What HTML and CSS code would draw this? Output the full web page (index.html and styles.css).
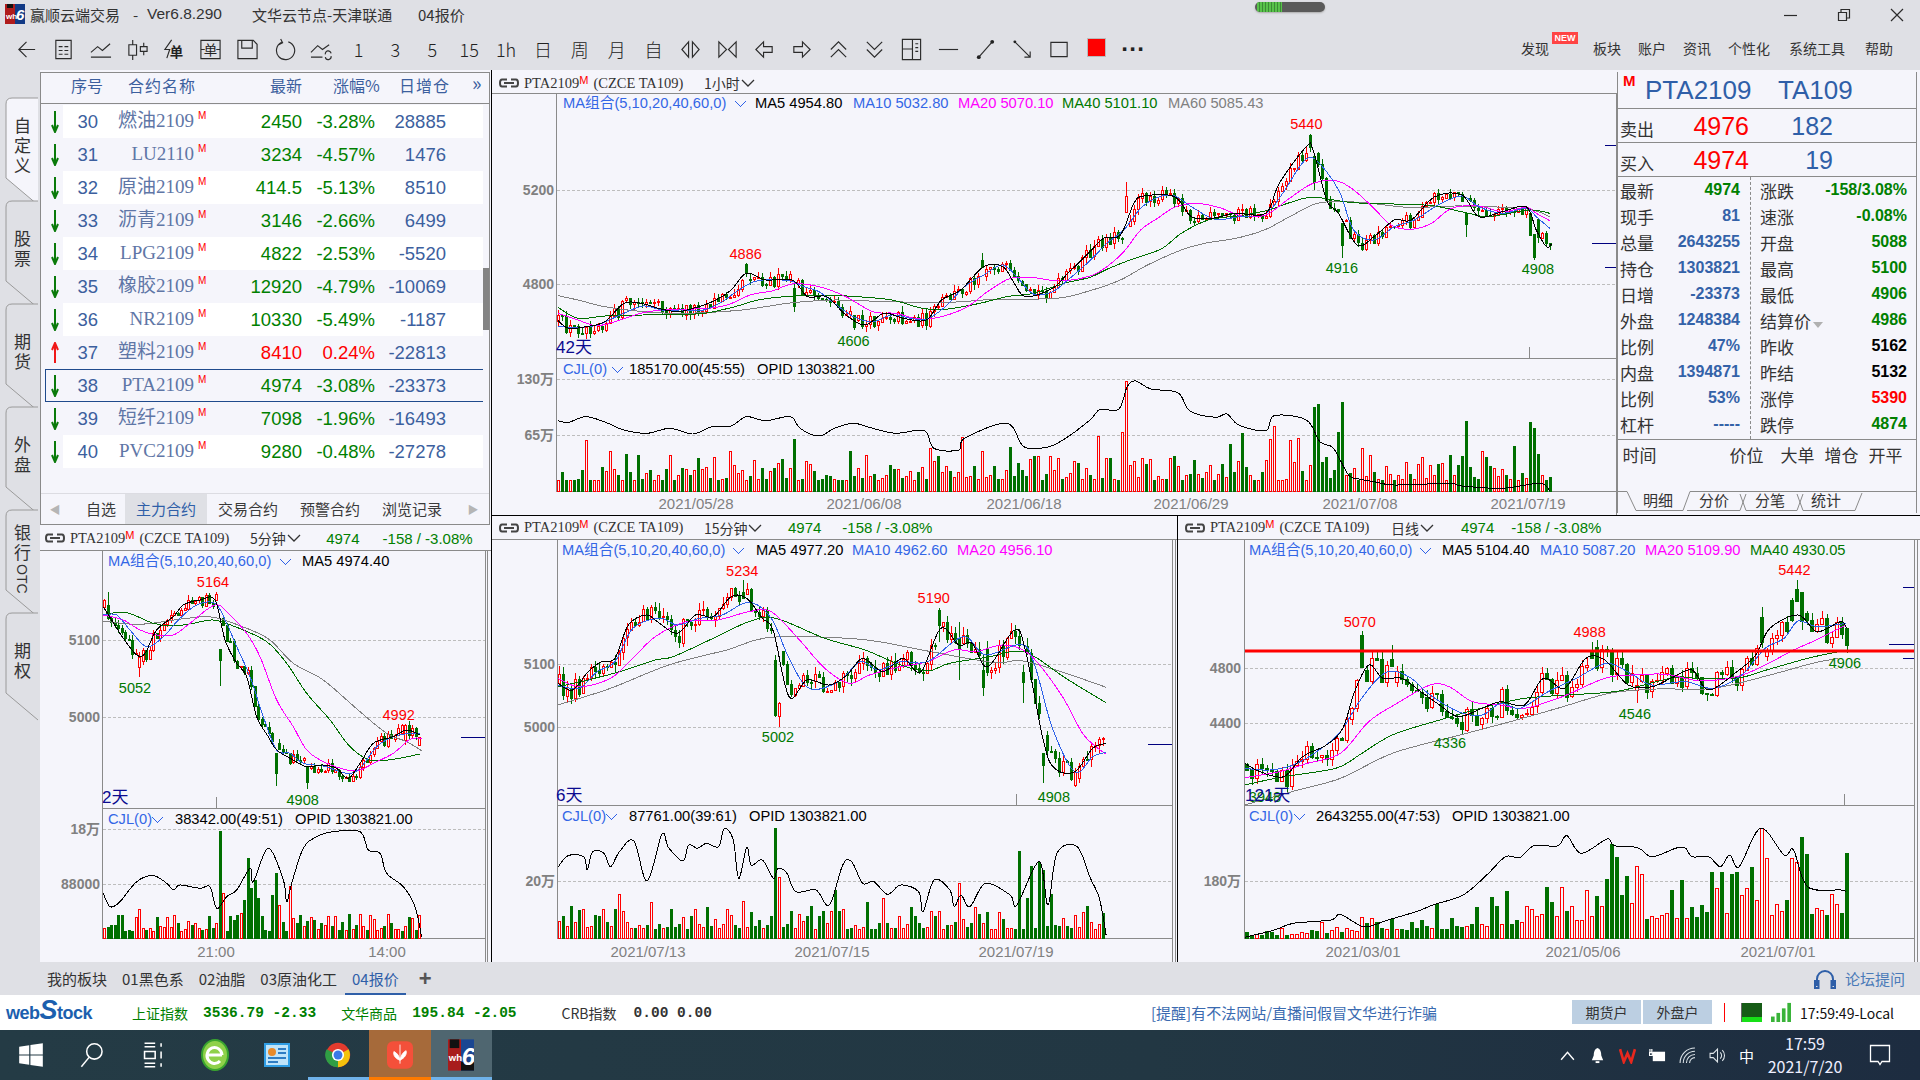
FILE: index.html
```html
<!DOCTYPE html>
<html lang="zh-CN">
<head>
<meta charset="utf-8">
<title>赢顺云端交易</title>
<link rel="stylesheet" href="styles.css">
</head>
<body>
<div class="app">
  <div class="titlebar">
    <svg class="applogo" viewBox="0 0 20 20"><rect width="10" height="20" fill="#b01c1c"/><rect x="10" width="10" height="20" fill="#123a86"/><rect x="2" y="0" width="6" height="4" fill="#111"/><text x="1" y="15" class="logotxt">wh</text><text x="11" y="16" class="logosix">6</text></svg>
    <span class="tt1">赢顺云端交易</span><span class="tt2">-</span><span class="tt3">Ver6.8.290</span><span class="tt4">文华云节点-天津联通</span><span class="tt5">04报价</span>
    <div class="pill"><i class="pillgreen"></i></div>
    <div class="winbtns">
      <svg viewBox="0 0 14 14"><path d="M0 7.5H13" class="ln"/></svg>
      <svg viewBox="0 0 14 14"><path d="M1.5 4.5H9.5V12.5H1.5ZM4 4.5V1.5H12.5V10H9.5" class="ln"/></svg>
      <svg viewBox="0 0 14 14"><path d="M1 1L13 13M13 1L1 13" class="ln"/></svg>
    </div>
  </div>

  <div class="toolbar">
    <div class="tools">
      <span class="tool"><svg viewBox="0 0 24 24"><path d="M21 12H4M12 4L4 12L12 20" class="ln"/></svg></span>
      <span class="tool"><svg viewBox="0 0 24 24"><path d="M4 2.5H20V21.5H4ZM7 9H11M13 9H17M7 13H11M13 13H17M7 17H11M13 17H17" class="ln"/></svg></span>
      <span class="tool"><svg viewBox="0 0 24 24"><path d="M2 20H23M2 15L9 9L14 13L22 6" class="ln"/></svg></span>
      <span class="tool"><svg viewBox="0 0 24 24"><path d="M3 7H11V18H3ZM7 2V7M7 18V23M15 9H22V14H15ZM18.500 5V9M18.500 14V18" class="ln"/></svg></span>
      <span class="tool"><svg viewBox="0 0 24 24"><path d="M9 2L2 12H7L4 21" class="ln"/><text x="7" y="20" class="tooltxt">单</text></svg></span>
      <span class="tool"><svg viewBox="0 0 24 24"><path d="M2 2.500H22V21.500H2ZM2 12H6M18 12H22" class="ln"/><text x="5" y="18" class="tooltxt2">单</text></svg></span>
      <span class="tool"><svg viewBox="0 0 24 24"><path d="M2 2.500H18L22 6.500V21.500H2ZM6 2.500V10.500H17V2.500" class="ln"/></svg></span>
      <span class="tool"><svg viewBox="0 0 24 24"><path d="M9 4.500A9.500 9.500 0 1 0 16 4M8 1L10 5L6 7" class="ln"/></svg></span>
      <span class="tool"><svg viewBox="0 0 24 24"><path d="M1 20H13M1 15L8 8L13 12L20 7M16 17A3 3 0 0 1 22 16M22 19A3 3 0 0 1 16 20" class="ln"/></svg></span>
      <span class="tool tnum">1</span><span class="tool tnum">3</span><span class="tool tnum">5</span><span class="tool tnum">15</span><span class="tool tnum">1h</span><span class="tool tnum">日</span><span class="tool tnum">周</span><span class="tool tnum">月</span><span class="tool tnum">自</span>
      <span class="tool"><svg viewBox="0 0 24 24"><path d="M10 4L3 12L10 20ZM14 4L21 12L14 20Z" class="ln"/></svg></span>
      <span class="tool"><svg viewBox="0 0 24 24"><path d="M3 4L11 12L3 20ZM21 4L13 12L21 20Z" class="ln"/></svg></span>
      <span class="tool"><svg viewBox="0 0 24 24"><path d="M11 4L3 12L11 20V15H20V9H11Z" class="ln"/></svg></span>
      <span class="tool"><svg viewBox="0 0 24 24"><path d="M13 4L21 12L13 20V15H4V9H13Z" class="ln"/></svg></span>
      <span class="tool"><svg viewBox="0 0 24 24"><path d="M4 12L12 4L20 12M4 20L12 12L20 20" class="ln"/></svg></span>
      <span class="tool"><svg viewBox="0 0 24 24"><path d="M4 4L12 12L20 4M4 12L12 20L20 12" class="ln"/></svg></span>
      <span class="tool"><svg viewBox="0 0 24 24"><path d="M2.500 1.500H21.500V22.500H2.500ZM2.500 11.500H13M13 1.500V22.500M16 6H19M16 10H19M16 14H19" class="ln"/></svg></span>
      <span class="tool"><svg viewBox="0 0 24 24"><path d="M2 12H22" class="ln"/></svg></span>
      <span class="tool"><svg viewBox="0 0 24 24"><path d="M5 20L19 4" class="ln"/><circle cx="5" cy="20" r="2"/><circle cx="19" cy="4" r="2"/></svg></span>
      <span class="tool"><svg viewBox="0 0 24 24"><path d="M4 4L20 20M14 20H20V14" class="ln"/><circle cx="4" cy="4" r="1.500"/></svg></span>
      <span class="tool"><svg viewBox="0 0 24 24"><path d="M3 4.500H20V19.500H3Z" class="ln"/></svg></span>
      <span class="tool"><i class="redsq"></i></span>
      <span class="tool tdots">···</span>
    </div>
    <nav class="menu">
      <span class="mfind">发现<b class="newb">NEW</b></span><span class="m1">板块</span><span class="m2">账户</span><span class="m3">资讯</span><span class="m4">个性化</span><span class="m5">系统工具</span><span class="m6">帮助</span>
    </nav>
  </div>

  <div class="main">
    <aside class="sidetabs">
      <div class="stab active"><svg class="stabbg" viewBox="0 0 40 112"><path d="M38 1H12Q6 1 6 7V81L38 108"/></svg><span>自定义</span></div>
      <div class="stab"><svg class="stabbg" viewBox="0 0 40 112"><path d="M38 1H12Q6 1 6 7V81L38 108"/></svg><span>股票</span></div>
      <div class="stab"><svg class="stabbg" viewBox="0 0 40 112"><path d="M38 1H12Q6 1 6 7V81L38 108"/></svg><span>期货</span></div>
      <div class="stab"><svg class="stabbg" viewBox="0 0 40 112"><path d="M38 1H12Q6 1 6 7V81L38 108"/></svg><span>外盘</span></div>
      <div class="stab"><svg class="stabbg" viewBox="0 0 40 112"><path d="M38 1H12Q6 1 6 7V81L38 108"/></svg><span>银行<em class="otc">OTC</em></span></div>
      <div class="stab"><svg class="stabbg" viewBox="0 0 40 112"><path d="M38 1H12Q6 1 6 7V81L38 108"/></svg><span>期权</span></div>
    </aside>

    <div class="leftcol">
      <section class="list">
        <div class="lhead"><span class="h1">序号</span><span class="h2">合约名称</span><span class="h3">最新</span><span class="h4">涨幅%</span><span class="h5">日增仓</span><span class="h6">»</span></div>
        <div class="lbody">
          <div class="lrows">
            <div class="row odd"><span class="ar"><svg viewBox="0 0 10 22"><path d="M5 0V21M2 14L5 21L8 14" class="ardn"/></svg></span><span>30</span><span class="nm">燃油2109</span><sup>M</sup><span class="dn">2450</span><span class="dn">-3.28%</span><span>28885</span></div>
            <div class="row"><span class="ar"><svg viewBox="0 0 10 22"><path d="M5 0V21M2 14L5 21L8 14" class="ardn"/></svg></span><span>31</span><span class="nm">LU2110</span><sup>M</sup><span class="dn">3234</span><span class="dn">-4.57%</span><span>1476</span></div>
            <div class="row odd"><span class="ar"><svg viewBox="0 0 10 22"><path d="M5 0V21M2 14L5 21L8 14" class="ardn"/></svg></span><span>32</span><span class="nm">原油2109</span><sup>M</sup><span class="dn">414.5</span><span class="dn">-5.13%</span><span>8510</span></div>
            <div class="row"><span class="ar"><svg viewBox="0 0 10 22"><path d="M5 0V21M2 14L5 21L8 14" class="ardn"/></svg></span><span>33</span><span class="nm">沥青2109</span><sup>M</sup><span class="dn">3146</span><span class="dn">-2.66%</span><span>6499</span></div>
            <div class="row odd"><span class="ar"><svg viewBox="0 0 10 22"><path d="M5 0V21M2 14L5 21L8 14" class="ardn"/></svg></span><span>34</span><span class="nm">LPG2109</span><sup>M</sup><span class="dn">4822</span><span class="dn">-2.53%</span><span>-5520</span></div>
            <div class="row"><span class="ar"><svg viewBox="0 0 10 22"><path d="M5 0V21M2 14L5 21L8 14" class="ardn"/></svg></span><span>35</span><span class="nm">橡胶2109</span><sup>M</sup><span class="dn">12920</span><span class="dn">-4.79%</span><span>-10069</span></div>
            <div class="row odd"><span class="ar"><svg viewBox="0 0 10 22"><path d="M5 0V21M2 14L5 21L8 14" class="ardn"/></svg></span><span>36</span><span class="nm">NR2109</span><sup>M</sup><span class="dn">10330</span><span class="dn">-5.49%</span><span>-1187</span></div>
            <div class="row"><span class="ar"><svg viewBox="0 0 10 22"><path d="M5 21V1M2 8L5 1L8 8" class="arup"/></svg></span><span>37</span><span class="nm">塑料2109</span><sup>M</sup><span class="up">8410</span><span class="up">0.24%</span><span>-22813</span></div>
            <div class="row sel"><span class="ar"><svg viewBox="0 0 10 22"><path d="M5 0V21M2 14L5 21L8 14" class="ardn"/></svg></span><span>38</span><span class="nm">PTA2109</span><sup>M</sup><span class="dn">4974</span><span class="dn">-3.08%</span><span>-23373</span></div>
            <div class="row"><span class="ar"><svg viewBox="0 0 10 22"><path d="M5 0V21M2 14L5 21L8 14" class="ardn"/></svg></span><span>39</span><span class="nm">短纤2109</span><sup>M</sup><span class="dn">7098</span><span class="dn">-1.96%</span><span>-16493</span></div>
            <div class="row odd"><span class="ar"><svg viewBox="0 0 10 22"><path d="M5 0V21M2 14L5 21L8 14" class="ardn"/></svg></span><span>40</span><span class="nm">PVC2109</span><sup>M</sup><span class="dn">9280</span><span class="dn">-0.48%</span><span>-27278</span></div>
          </div>
          <div class="scroll"><i class="thumb"></i></div>
        </div>
        <div class="ltabs">
          <span class="lnav">◀</span><span class="lt first">自选</span><span class="lt on">主力合约</span><span class="lt">交易合约</span><span class="lt">预警合约</span><span class="lt">浏览记录</span><span class="lnav nr">▶</span>
        </div>
      </section>
      <section class="chart c5">
        <header class="chead">
          <svg class="link" viewBox="0 0 20 10"><path d="M8 1.500H3Q1 1.500 1 5T3 8.500H8M12 1.500H17Q19 1.500 19 5T17 8.500H12M5 5H15" class="lnk"/></svg>
          <span class="sym">PTA2109<sup>M</sup></span><span class="sym ex">(CZCE TA109)</span><span class="per">5分钟<svg class="chev" viewBox="0 0 14 8"><path d="M1 1L7 7L13 1"/></svg></span><span class="px">4974</span><span class="chg">-158 / -3.08%</span>
        </header>
        <svg class="plot" id="c5"></svg>
      </section>
    </div>

    <div class="rightcol">
      <div class="toprow">
        <section class="chart c60">
          <header class="chead">
            <svg class="link" viewBox="0 0 20 10"><path d="M8 1.500H3Q1 1.500 1 5T3 8.500H8M12 1.500H17Q19 1.500 19 5T17 8.500H12M5 5H15" class="lnk"/></svg>
            <span class="sym">PTA2109<sup>M</sup></span><span class="sym ex">(CZCE TA109)</span><span class="per">1小时<svg class="chev" viewBox="0 0 14 8"><path d="M1 1L7 7L13 1"/></svg></span>
          </header>
          <svg class="plot" id="c60"></svg>
        </section>
        <aside class="detail">
          <div class="dtitle"><b class="dm">M</b><span class="dsym">PTA2109</span><span class="dsym d2">TA109</span></div>
          <div class="dq"><span class="dql">卖出</span><span class="dqp">4976</span><span class="dqv">182</span></div>
          <div class="dq"><span class="dql">买入</span><span class="dqp">4974</span><span class="dqv">19</span></div>
          <div class="dgrid">
            <div class="dcol">
              <div class="dr"><span>最新</span><b class="g">4974</b></div>
              <div class="dr"><span>现手</span><b>81</b></div>
              <div class="dr"><span>总量</span><b>2643255</b></div>
              <div class="dr"><span>持仓</span><b>1303821</b></div>
              <div class="dr"><span>日增</span><b>-23373</b></div>
              <div class="dr"><span>外盘</span><b>1248384</b></div>
              <div class="dr"><span>比例</span><b>47%</b></div>
              <div class="dr"><span>内盘</span><b>1394871</b></div>
              <div class="dr"><span>比例</span><b>53%</b></div>
              <div class="dr"><span>杠杆</span><b>-----</b></div>
            </div>
            <div class="dcol r">
              <div class="dr"><span>涨跌</span><b class="g">-158/3.08%</b></div>
              <div class="dr"><span>速涨</span><b class="g">-0.08%</b></div>
              <div class="dr"><span>开盘</span><b class="g">5088</b></div>
              <div class="dr"><span>最高</span><b class="g">5100</b></div>
              <div class="dr"><span>最低</span><b class="g">4906</b></div>
              <div class="dr"><span>结算价<i class="caret"></i></span><b class="g">4986</b></div>
              <div class="dr"><span>昨收</span><b class="k">5162</b></div>
              <div class="dr"><span>昨结</span><b class="k">5132</b></div>
              <div class="dr"><span>涨停</span><b class="rd">5390</b></div>
              <div class="dr"><span>跌停</span><b class="g">4874</b></div>
            </div>
          </div>
          <div class="dticks"><span class="t1">时间</span><span class="t2">价位</span><span class="t3">大单</span><span class="t3">增仓</span><span class="t3">开平</span></div>
          <div class="dtabs">
            <svg class="dtabsbg" viewBox="0 0 300 24"><path d="M0 .5H10L19 19.500H66L73 .5H300M70 19.500H123L129 3M123 3L129 19.500H180L186 3M180 3L186 19.500H238L245 2"/></svg>
            <span class="dt on">明细</span><span class="dt">分价</span><span class="dt">分笔</span><span class="dt">统计</span>
          </div>
        </aside>
      </div>
      <div class="botrow">
        <section class="chart c15">
          <header class="chead">
            <svg class="link" viewBox="0 0 20 10"><path d="M8 1.500H3Q1 1.500 1 5T3 8.500H8M12 1.500H17Q19 1.500 19 5T17 8.500H12M5 5H15" class="lnk"/></svg>
            <span class="sym">PTA2109<sup>M</sup></span><span class="sym ex">(CZCE TA109)</span><span class="per">15分钟<svg class="chev" viewBox="0 0 14 8"><path d="M1 1L7 7L13 1"/></svg></span><span class="px">4974</span><span class="chg">-158 / -3.08%</span>
          </header>
          <svg class="plot" id="c15"></svg>
        </section>
        <section class="chart cd">
          <header class="chead">
            <svg class="link" viewBox="0 0 20 10"><path d="M8 1.500H3Q1 1.500 1 5T3 8.500H8M12 1.500H17Q19 1.500 19 5T17 8.500H12M5 5H15" class="lnk"/></svg>
            <span class="sym">PTA2109<sup>M</sup></span><span class="sym ex">(CZCE TA109)</span><span class="per">日线<svg class="chev" viewBox="0 0 14 8"><path d="M1 1L7 7L13 1"/></svg></span><span class="px">4974</span><span class="chg">-158 / -3.08%</span>
          </header>
          <svg class="plot" id="cd"></svg>
        </section>
      </div>
    </div>
  </div>

  <div class="boardbar">
    <div class="boards"><span class="bd">我的板块</span><span class="bd">01黑色系</span><span class="bd">02油脂</span><span class="bd">03原油化工</span><span class="bd on">04报价</span><span class="bplus">+</span></div>
    <div class="forum"><svg viewBox="0 0 24 24"><path d="M4 19V12A8 8 0 0 1 20 12V19M2 14H5.500V21H2ZM18.500 14H22V21H18.500Z" class="hs"/></svg><span>论坛提问</span></div>
  </div>

  <div class="status">
    <div class="wslogo">web<i>S</i>tock</div>
    <span class="idx g s1">上证指数</span><span class="idxv g">3536.79 -2.33</span>
    <span class="idx g s2">文华商品</span><span class="idxv g">195.84 -2.05</span>
    <span class="idx s3">CRB指数</span><span class="idxv v3">0.00 0.00</span>
    <span class="notice">[提醒]有不法网站/直播间假冒文华进行诈骗</span>
    <span class="acct">期货户</span><span class="acct a2">外盘户</span>
    <i class="redbar"></i>
    <i class="mem"></i>
    <svg class="sig" viewBox="0 0 22 22"><rect x="0" y="16" width="4" height="6"/><rect x="6" y="12" width="4" height="10"/><rect x="12" y="7" width="4" height="15"/><rect x="18" y="1" width="4" height="21"/></svg>
    <span class="clock">17:59:49-Local</span>
  </div>

  <footer class="taskbar">
    <div class="tbleft">
      <span class="tb"><svg viewBox="0 0 22 22"><path d="M1 4L9.500 2.800V10.500H1ZM10.500 2.600L21 1V10.500H10.500ZM1 11.500H9.500V19.200L1 18ZM10.500 11.500H21V21L10.500 19.400Z" fill="#fff"/></svg></span>
      <span class="tb"><svg viewBox="0 0 22 22"><circle cx="13" cy="8" r="6.500" class="wln"/><path d="M8.500 13L2 21" class="wln"/></svg></span>
      <span class="tb"><svg viewBox="0 0 22 22"><path d="M3 1H12M3 4H12M3 8H12V14H3V8ZM3 18H12M3 21H12M17 1V4M17 8V14M17 18V21" class="wln"/></svg></span>
      <span class="tb"><svg viewBox="0 0 28 32"><ellipse cx="14" cy="16" rx="13" ry="15" fill="#8fd14a" stroke="#3aa52f" stroke-width="2"/><path d="M7 16H21M21 16A7.500 8 0 1 0 19 22" class="eln"/></svg></span>
      <span class="tb"><svg viewBox="0 0 28 28"><rect x="1" y="2" width="26" height="24" fill="#2f9de4"/><rect x="3" y="4" width="22" height="20" fill="#bfe4fa"/><circle cx="9" cy="11" r="4" fill="#e88a2a"/><path d="M15 8H23M15 12H23M5 17H23M5 21H15" stroke="#2f7dc4" stroke-width="2"/></svg></span>
      <span class="tb"><svg viewBox="0 0 32 32"><circle cx="16" cy="16" r="15" fill="#e33b2e"/><path d="M16 16L29 9A15 15 0 0 1 16 31Z" fill="#f4c20d"/><path d="M16 16L16 31A15 15 0 0 1 2 9Z" fill="#2f9e44"/><circle cx="16" cy="16" r="7.500" fill="#fff"/><circle cx="16" cy="16" r="5.500" fill="#3b78e7"/></svg></span>
      <span class="tb t-orange"><svg viewBox="0 0 30 36"><rect x="0" y="2" width="30" height="32" rx="7" fill="#f4503a"/><path d="M15 6V28M15 24C9 22 7 18 8 14C12 16 14 19 15 24M15 24C21 21 23 17 22 13C18 15 16 19 15 24" fill="#fff" stroke="#fff"/></svg></span>
      <span class="tb t-wh"><svg viewBox="0 0 30 36"><rect width="15" height="36" fill="#a81c1c"/><rect x="15" width="15" height="36" fill="#1a4692"/><rect x="2" width="11" height="10" fill="#111"/><rect x="15" y="26" width="15" height="10" fill="#111"/><text x="1" y="25" class="whtxt">wh</text><text x="16" y="30" class="whsix">6</text></svg></span>
    </div>
    <div class="tray">
      <svg class="tr" viewBox="0 0 16 16"><path d="M2 12L8 5L14 12" class="wln"/></svg>
      <svg class="tr" viewBox="0 0 16 18"><path d="M8 1C11 2 12 5 12 9L14 14H2L4 9C4 5 5 2 8 1Z" fill="#fff"/><rect x="6" y="15" width="4" height="2" fill="#fff"/></svg>
      <svg class="tr" viewBox="0 0 16 16"><path d="M1 2L4.500 14L8 6L11.500 14L15 2" class="redw"/></svg>
      <svg class="tr" viewBox="0 0 18 16"><rect x="4" y="4" width="13" height="10" fill="#fff"/><path d="M1 1V5M3 1V5M0.500 5H3.500V8H0.500Z" class="wln"/></svg>
      <svg class="tr" viewBox="0 0 16 16"><path d="M1 15A14 14 0 0 1 15 1M4 15A11 11 0 0 1 15 4M7 15A8 8 0 0 1 15 7M10 15A5 5 0 0 1 15 10" class="wlnt"/></svg>
      <svg class="tr" viewBox="0 0 16 16"><path d="M1 6H4L8 2V14L4 10H1ZM10.500 5A4 4 0 0 1 10.500 11M12.500 3A7 7 0 0 1 12.500 13" class="wlnt"/></svg>
      <span class="ime">中</span>
      <div class="tdate"><span>17:59</span><span>2021/7/20</span></div>
      <svg class="notif" viewBox="0 0 22 22"><path d="M1.500 1.500H20.500V17.500H13L11 20.500L9 17.500H1.500Z" class="wln"/></svg>
    </div>
  </footer>
</div>
<script src="chart.js"></script>
</body>
</html>
```

FILE: styles.css
```css
* { box-sizing: border-box; }
html, body { margin: 0; padding: 0; }
body { font-family: "Noto Sans CJK SC", "Noto Sans", sans-serif; background: #dfe0e5; color: #333; }
.app { width: 1920px; height: 1080px; display: flex; flex-direction: column; overflow: hidden; position: relative; }

/* title bar */
.titlebar { height: 28px; display: flex; align-items: center; padding-left: 5px; font-size: 15px; color: #333; position: relative; }
.applogo { width: 20px; height: 20px; margin-right: 5px; }
.logotxt { font: bold 8px "Liberation Sans", sans-serif; fill: #fff; }
.logosix { font: italic bold 15px "Liberation Sans", sans-serif; fill: #fff; }
.tt1 { width: 103px; }
.tt2 { width: 14px; }
.tt3 { width: 105px; font-family: "Liberation Sans", sans-serif; font-size: 15.500px; }
.tt4 { width: 166px; }
.pill { position: absolute; left: 1255px; top: 2px; width: 70px; height: 10px; border-radius: 5px; background: #5a5a5a; box-shadow: 0 1px 2px #aaa; overflow: hidden; }
.pillgreen { display: block; width: 25px; height: 10px; margin-left: 2px; background: repeating-linear-gradient(90deg, #58c24a 0 2px, #3c8a36 2px 3px); }
.winbtns { position: absolute; right: 16px; top: 8px; display: flex; gap: 39px; }
.winbtns svg { width: 14px; height: 14px; }
.ln { fill: none; stroke: #2b2b2b; stroke-width: 1.2; }

/* toolbar */
.toolbar { height: 42px; display: flex; justify-content: space-between; align-items: center; }
.tools { display: flex; padding-left: 8px; }
.tool { width: 36.9px; height: 30px; display: flex; align-items: center; justify-content: center; color: #222; }
.tool svg { width: 23px; height: 23px; }
.tool svg circle { fill: #222; }
.tooltxt { font-size: 14px; fill: #222; font-weight: bold; }
.tooltxt2 { font-size: 14px; fill: #222; }
.tnum { font-size: 18px; font-family: "Noto Sans CJK SC", sans-serif; font-weight: 300; }
.tdots { font-size: 24px; font-weight: bold; letter-spacing: 0; font-family: "Liberation Sans", sans-serif; }
.redsq { width: 19px; height: 19px; background: #f00; border: 1px solid #bbb; display: block; margin-top: -4px; }
.menu { position: relative; height: 42px; width: 420px; font-size: 14px; color: #333; }
.menu span { position: absolute; top: 10px; }
.mfind { left: 21px; }
.newb { position: absolute; left: 31px; top: -6px; width: 26px; height: 12px; background: #f44; color: #fff; font: bold 9px/12px "Liberation Sans", sans-serif; text-align: center; }
.m1 { left: 93px; } .m2 { left: 138px; } .m3 { left: 183px; } .m4 { left: 228px; } .m5 { left: 289px; } .m6 { left: 365px; }

/* main */
.main { height: 892px; display: flex; background: #f5f5fb; }
.sidetabs { width: 40px; padding-top: 27px; background: #dfe0e5; flex: none; }
.stab { height: 103px; position: relative; font-size: 17px; color: #333; display: flex; align-items: center; justify-content: flex-start; padding: 0 0 4px 12px; }
.stab span { position: relative; display: block; writing-mode: vertical-rl; letter-spacing: 3px; line-height: 20px; white-space: nowrap; }
.otc { font-style: normal; font: 14px "Liberation Sans", sans-serif; letter-spacing: 0; }
.stabbg { position: absolute; left: 0; top: 0; width: 40px; height: 112px; overflow: visible; }
.stabbg path { fill: #dfe0e5; stroke: #9a9a9a; }
.active .stabbg path { fill: #f5f5fb; }
.leftcol { width: 452px; flex: none; border-right: 1px solid #000; display: flex; flex-direction: column; }
.rightcol { flex: 1; display: flex; flex-direction: column; min-width: 0; }
.toprow { height: 446px; display: flex; border-bottom: 1px solid #000; flex: none; }
.botrow { flex: 1; display: flex; min-height: 0; }

/* quote list */
.list { height: 453px; margin: 2px 1px 0 0; width: 450px; border: 1px solid #8a8a8a; display: flex; flex-direction: column; flex: none; }
.lhead { height: 31px; border-bottom: 1px solid #8a8a8a; position: relative; font-size: 16px; color: #3c5f9e; flex: none; }
.lhead span { position: absolute; top: 0; }
.h1 { left: 30px; } .h2 { left: 87px; letter-spacing: 1px; } .h3 { left: 229px; } .h4 { left: 292px; } .h5 { left: 358px; letter-spacing: 1px; } .h6 { left: 431px; font-size: 20px; top: -5px !important; }
.lbody { flex: 1; display: flex; min-height: 0; }
.lrows { flex: 1; padding-top: 1px; }
.scroll { width: 6px; }
.thumb { display: block; width: 6px; height: 62px; margin-top: 164px; background: #848484; }
.row { height: 33px; display: grid; grid-template-columns: 22px 35px 96px 14px 94px 73px 71px; align-items: center; font: 18.500px "Liberation Sans", sans-serif; color: #3c5f9e; position: relative; }
.row span { text-align: right; white-space: nowrap; }
.row.odd { background: #fff; }
.row .ar { background: #f5f5fb; height: 33px; display: flex; justify-content: flex-end; align-items: center; padding-right: 3px; }
.ar svg { width: 10px; height: 22px; }
.ardn { fill: none; stroke: #0a7a0a; stroke-width: 2; }
.arup { fill: none; stroke: #f01818; stroke-width: 2; }
.row sup { color: #f00; font-size: 10px; line-height: 10px; align-self: start; margin: 6px 0 0 4px; font-family: "Liberation Sans", sans-serif; }
.row .nm { font: 19px/24px "Liberation Serif", "Noto Sans CJK SC", serif; color: #5f76a6; margin-top: -2px; }
.dn { color: #008000; }
.up { color: #f00; }
.sel::after { content: ""; position: absolute; left: 4px; right: 0; top: 0; bottom: 0; border: 1px solid #1f4a8c; border-right: 0; pointer-events: none; }
.ltabs { height: 31px; border-top: 1px solid #dcdce2; display: flex; align-items: stretch; font-size: 15px; color: #3a3a3a; position: relative; flex: none; }
.lnav { width: 36px; flex: none; color: #b5b5b5; font-size: 11px; line-height: 30px; text-align: center; padding-right: 8px; }
.lt { width: 82px; flex: none; line-height: 29px; text-align: center; }
.lt.first { width: 48px; }
.lt.on { background: #dfe0e5; color: #2f5fa8; }
.lnav.nr { padding: 0 0 0 4px; }

/* charts */
.chart { display: flex; flex-direction: column; position: relative; min-width: 0; }
.chead { display: flex; align-items: center; flex: none; height: 24px; border-bottom: 1px solid #8a8a8a; padding-left: 7px; font-size: 14px; color: #333; white-space: nowrap; }
.c60 .chead { padding-top: 3px; }
.link { width: 20px; height: 10px; margin-right: 5px; flex: none; }
.lnk { fill: none; stroke: #444; stroke-width: 2; }
.sym { font: 14.500px "Liberation Serif", serif; color: #333; }
.sym sup { color: #f00; font: 11px/1 "Liberation Sans", sans-serif; vertical-align: 4px; margin-right: 5px; }
.per { display: flex; align-items: center; font-size: 14px; margin-left: 20.500px; }
.chev { width: 14px; height: 8px; margin-left: 1px; }
.chev path { fill: none; stroke: #333; stroke-width: 1.300; }
.px { color: #008000; margin-left: 25.500px; font: 15px "Liberation Sans", sans-serif; }
.chg { color: #008000; margin-left: 21px; font: 15px "Liberation Sans", sans-serif; }
.plot { display: block; flex: 1; width: 100%; min-height: 0; }
.c5 { flex: 1; margin-top: 1px; }
.c5 .chead { height: 25px; padding-left: 5px; }
.c5 .chg { margin-left: 23px; }
.c60 { width: 1125px; flex: none; }
.c15 { width: 686px; flex: none; border-right: 1px solid #000; }
.c15 .chead { padding-left: 7px; }
.cd { flex: 1; }
.cd .chead { padding-left: 7px; }
.cd .per { margin-left: 21.500px; }
.cd .px { margin-left: 27px; }
.cd .chg { margin-left: 17px; }

/* svg chart text */
.ax { font: bold 14px "Liberation Sans", "Noto Sans CJK SC", sans-serif; fill: #808080; text-anchor: end; dominant-baseline: central; }
.dtx { font: 15px "Liberation Sans", sans-serif; fill: #808080; text-anchor: middle; dominant-baseline: central; }
.ml { font: 14.500px "Liberation Sans", sans-serif; text-anchor: middle; dominant-baseline: central; }
.lg { font: 14.700px "Liberation Sans", "Noto Sans CJK SC", sans-serif; dominant-baseline: central; white-space: pre; }
.days { font: 17px "Liberation Sans", "Noto Sans CJK SC", sans-serif; fill: #0a0a90; dominant-baseline: central; }
.fr { fill: #f00; } .fg { fill: #007800; } .fk { fill: #000; } .fb { fill: #3366e6; } .fm { fill: #f0f; } .fy { fill: #808080; }
.grid { stroke: #bdbdbd; stroke-dasharray: 3 2; stroke-width: 1; }
.axis { stroke: #8a8a8a; stroke-width: 1; }
.tick { stroke: #00007f; stroke-width: 1; }
.wick { stroke-width: 1; shape-rendering: crispEdges; }
.bar { shape-rendering: crispEdges; }
.ma { fill: none; stroke-width: 1; shape-rendering: crispEdges; }
.ma-k { stroke: #000; } .ma-b { stroke: #2f62e8; } .ma-m { stroke: #f0f; } .ma-g { stroke: #006f00; } .ma-y { stroke: #808080; }
.redline { stroke: #f00; stroke-width: 3; }

/* detail panel */
.detail { width: 300px; height: 441px; margin-top: 2px; border: 1px solid #8a8a8a; border-top: 0; border-bottom: 0; border-right: 1px solid #8a8a8a; display: flex; flex-direction: column; flex: none; position: relative; }
.dtitle { height: 37px; border-bottom: 1px solid #8a8a8a; position: relative; flex: none; }
.dm { position: absolute; left: 5px; top: 0; color: #f00; font: bold 15px "Liberation Sans", sans-serif; }
.dsym { position: absolute; left: 27px; top: 1px; font: 26px/34px "Liberation Sans", sans-serif; color: #2f5fa8; }
.d2 { left: 160px; }
.dq { height: 34px; border-bottom: 1px solid #8a8a8a; display: flex; position: relative; flex: none; }
.dql { position: absolute; left: 2px; top: 7px; font-size: 17px; color: #333; }
.dqp { position: absolute; right: 167px; top: 2px; font: 25px/30px "Liberation Sans", sans-serif; color: #f00; }
.dqv { position: absolute; right: 83px; top: 2px; font: 25px/30px "Liberation Sans", sans-serif; color: #2f5fa8; }
.dgrid { display: flex; height: 263px; border-bottom: 1px solid #8a8a8a; flex: none; }
.dcol { width: 133px; border-right: 1px dashed #8a8a8a; }
.dcol.r { flex: 1; border: 0; }
.dr { height: 26px; display: flex; justify-content: space-between; align-items: center; padding: 0 10px 0 2px; font-size: 17px; color: #333; }
.dcol.r .dr { padding: 0 9px 0 9px; }
.dr b { font: bold 16px "Liberation Sans", sans-serif; color: #3462a8; }
.dr b.g { color: #008000; } .dr b.k { color: #000; } .dr b.rd { color: #f00; }
.caret { display: inline-block; width: 0; height: 0; border: 5px solid transparent; border-top: 6px solid #b0b0b0; border-bottom: 0; margin-left: 2px; }
.dticks { height: 51px; padding: 2px 0 0 4.500px; font-size: 17px; color: #333; display: flex; flex: none; }
.t1 { width: 107px; }
.t2 { width: 51px; }
.t3 { width: 44px; }
.dtabs { height: 24px; display: flex; padding-left: 12px; font-size: 15px; color: #333; position: relative; }
.dtabsbg { position: absolute; left: -1px; top: 0; width: 300px; height: 24px; }
.dtabsbg path { fill: none; stroke: #8a8a8a; }
.dt { position: relative; width: 56px; text-align: center; line-height: 18px; }

/* board bar */
.boardbar { height: 33px; display: flex; justify-content: space-between; align-items: center; padding: 0 15px 0 47px; flex: none; }
.boards { display: flex; align-items: center; font-size: 15px; color: #333; gap: 15px; height: 33px; }
.bd { line-height: 33px; height: 33px; }
.bd.on { color: #2f5fa8; border-bottom: 2px solid #2f5fa8; padding: 0 7px; margin: 0 -7px; }
.bplus { font: bold 22px "Liberation Sans", sans-serif; color: #555; margin-left: 5px; }
.forum { display: flex; align-items: center; gap: 8px; font-size: 15px; color: #4a7ab8; }
.forum svg { width: 24px; height: 24px; }
.hs { fill: none; stroke: #2f5fa8; stroke-width: 2; }

/* status bar */
.status { height: 35px; background: #fff; display: flex; align-items: center; position: relative; flex: none; font-size: 14px; }
.wslogo { width: 132px; padding-left: 6px; font: bold 18px "Liberation Sans", sans-serif; color: #1c5fae; letter-spacing: -.5px; flex: none; }
.wslogo i { font-size: 27px; line-height: 19px; }
.g { color: #008000; }
.idx { width: 71px; }
.idxv { font: bold 14.500px "Liberation Mono", monospace; }
.s2 { margin-left: 25px; }
.s3 { margin-left: 45px; color: #333; width: 72px; }
.v3 { color: #333; }
.notice { position: absolute; left: 1151px; color: #3a6ab0; font-size: 15px; }
.acct { position: absolute; left: 1572px; top: 5px; width: 69px; height: 24px; background: #bccfe2; text-align: center; line-height: 24px; color: #333; }
.a2 { left: 1643px; }
.redbar { position: absolute; left: 1724px; top: 8px; width: 1px; height: 19px; background: #f00; }
.mem { position: absolute; left: 1741px; top: 8px; width: 21px; height: 19px; background: linear-gradient(#165c16 0 75%, #17e017 75%); border-left: 1px solid #666; }
.sig { position: absolute; left: 1770px; top: 7px; width: 22px; height: 20px; fill: #39b339; }
.clock { position: absolute; left: 1800px; color: #111; }

/* taskbar */
.taskbar { height: 50px; flex: 1; display: flex; justify-content: space-between; background: linear-gradient(90deg, #243b45, #223743 60%, #1d2c40); color: #fff; }
.tbleft { display: flex; }
.tb { width: 61.500px; height: 50px; display: flex; align-items: center; justify-content: center; position: relative; }
.tb svg { width: 26px; height: 32px; }
.tb:nth-child(n+4):nth-child(-n+5) svg { width: 28px; height: 32px; }
.t-orange { background: #a66a3a; box-shadow: inset 0 -3px 0 #ff7a00; }
.t-wh { background: #4f6670; box-shadow: inset 0 -3px 0 #6fb2ea; }
.tb:nth-child(6) { box-shadow: inset 0 -3px 0 #6fb2ea; }
.whtxt { font: bold 11px "Liberation Sans", sans-serif; fill: #fff; }
.whsix { font: italic bold 28px "Liberation Sans", sans-serif; fill: #fff; }
.wln { fill: none; stroke: #fff; stroke-width: 1.300; }
.wlnt { fill: none; stroke: #dfe6ea; stroke-width: 1; }
.eln { fill: none; stroke: #fff; stroke-width: 3; }
.redw { fill: none; stroke: #e8281e; stroke-width: 2.500; }
.tray { display: flex; align-items: center; }
.tr { width: 17px; height: 17px; margin-right: 13px; }
.ime { font-size: 15px; margin: 0 8px 0 0; }
.tdate { width: 86px; display: flex; flex-direction: column; align-items: center; font-size: 16px; line-height: 23px; color: #eef; white-space: nowrap; }
.notif { width: 22px; height: 22px; margin: 0 29px 0 21px; flex: none; }
```

FILE: chart.js
```js
const mulberry = s => () => { s = (s * 16807) % 2147483647; return s / 2147483647; };
const frame = (ox, sx, oy) => a => { const r = []; for (let i = 0; i < a.length; i += 2) r.push([ox + a[i] / sx, oy + a[i + 1] / 3]); return r; };
const interp = (p, x) => {
  if (x <= p[0][0]) return p[0][1];
  for (let i = 1; i < p.length; i++) if (x <= p[i][0]) { const t = (x - p[i - 1][0]) / (p[i][0] - p[i - 1][0]); return p[i - 1][1] + t * (p[i][1] - p[i - 1][1]); }
  return p[p.length - 1][1];
};
const smooth = p => {
  let d = `M${p[0][0].toFixed(1)} ${p[0][1].toFixed(1)}`;
  for (let i = 0; i < p.length - 1; i++) {
    const a = p[Math.max(i - 1, 0)], b = p[i], c = p[i + 1], e = p[Math.min(i + 2, p.length - 1)];
    d += `C${(b[0] + (c[0] - a[0]) / 6).toFixed(1)} ${(b[1] + (c[1] - a[1]) / 6).toFixed(1)} ${(c[0] - (e[0] - b[0]) / 6).toFixed(1)} ${(c[1] - (e[1] - b[1]) / 6).toFixed(1)} ${c[0].toFixed(1)} ${c[1].toFixed(1)}`;
  }
  return d;
};

function drawChart(c) {
  const svg = document.getElementById(c.id), r = svg.getBoundingClientRect();
  svg.setAttribute('viewBox', `${r.left} ${r.top} ${r.width} ${r.height}`);
  const o = [], ln = (x1, y1, x2, y2, k) => o.push(`<line x1="${x1}" y1="${y1}" x2="${x2}" y2="${y2}" class="${k}"/>`);
  const tx = (x, y, s, k) => o.push(`<text x="${x}" y="${y}" class="${k}">${s}</text>`);
  const RED = '#f00', GRN = '#006f00', BG = '#f5f5fb';

  c.grids.forEach(g => { ln(c.ax + 1, g[0] + .5, c.right, g[0] + .5, 'grid'); tx(c.ax - c.axPad, g[0], g[1], 'ax'); });
  ln(c.ax + .5, r.top, c.ax + .5, c.bot, 'axis');
  ln(c.ax, c.sep + .5, c.right, c.sep + .5, 'axis');
  ln(c.ax, c.bot + .5, c.right, c.bot + .5, 'axis');
  ln(c.right + .5, r.top, c.right + .5, r.bottom, 'axis');
  if (c.gutter) ln(c.gutter + .5, r.top, c.gutter + .5, r.bottom, 'axis');
  c.dates.forEach(d => tx(d[0], c.dateY, d[1], 'dtx'));
  c.ticks.forEach(t => ln(t[0], t[2] + .5, t[1], t[2] + .5, 'tick'));
  ln(c.vtick + .5, c.sep - 11, c.vtick + .5, c.sep, 'axis');

  // candles and volumes share one seeded direction sequence
  const rnd = mulberry(c.seed), bars = [], cand = [];
  let prev = interp(c.k, c.x0);
  for (let x = c.x0; x <= c.x1; x += c.pitch) {
    const mid = interp(c.k, x), close = mid + (rnd() - .5) * 2 * c.amp;
    let open = prev, hi = Math.min(open, close) - rnd() * c.wick, lo = Math.max(open, close) + rnd() * c.wick;
    const up = close < open;
    cand.push({ x, open, close, hi, lo, up });
    const lv = typeof c.level === 'number' ? c.level : interp(c.level, x), v = rnd();
    bars.push({ x, h: lv * (.42 + v * v * 1.05), up });
    prev = close;
  }
  const nearest = (arr, x) => arr.reduce((a, b) => Math.abs(b.x - x) < Math.abs(a.x - x) ? b : a);
  c.spikes.forEach(s => { const b = nearest(bars, s[0]); b.h = c.bot - s[1]; b.up = s[2] === 'r'; });
  c.specials.forEach(s => { const q = nearest(cand, s[0]); q.hi = s[1]; q.lo = s[2]; q.open = s[3]; q.close = s[4]; q.up = s[4] < s[3]; });

  bars.forEach(b => {
    const x = Math.round(b.x);
    o.push(`<rect class="bar" x="${x + .5}" y="${(c.bot - b.h).toFixed(0)}" width="${c.bw - 1}" height="${b.h.toFixed(0)}" fill="${b.up ? BG : GRN}" stroke="${b.up ? RED : GRN}"/>`);
  });
  o.push(`<path class="ma ma-k" d="${smooth(c.cjl)}"/>`);
  cand.forEach(q => {
    const x = Math.round(q.x), top = Math.round(Math.min(q.open, q.close)), h = Math.max(1, Math.round(Math.abs(q.open - q.close))), col = q.up ? RED : GRN, cx = x + (c.bw - 1) / 2 + .5;
    o.push(`<line class="wick" x1="${cx}" x2="${cx}" y1="${q.hi.toFixed(0)}" y2="${q.lo.toFixed(0)}" stroke="${col}"/>`);
    o.push(`<rect class="bar" x="${x + .5}" y="${top + .5}" width="${c.bw - 1}" height="${h}" fill="${q.up ? BG : GRN}" stroke="${col}"/>`);
  });
  [['y', c.y], ['g', c.g], ['m', c.m], ['b', c.b], ['k', c.k]].forEach(l => o.push(`<path class="ma ma-${l[0]}" d="${smooth(l[1])}"/>`));
  if (c.redLine) ln(c.ax + 1, c.redLine, c.right, c.redLine, 'redline');

  c.labels.forEach(l => tx(l[0], l[1], l[2], 'ml ' + (l[3] === 'r' ? 'fr' : 'fg')));
  c.legend.forEach(l => tx(l[0], c.legendY, l[2], 'lg f' + l[1]));
  tx(c.legend[0][0], c.cjlY, 'CJL(0)', 'lg fb');
  [c.chev1, c.chev2].forEach((x, i) => {
    const y = i ? c.cjlY : c.legendY;
    o.push(`<path class="ma ma-b" d="M${x} ${y - 2}l5.500 5.500 5.500 -5.500"/>`);
  });
  tx(c.cjlA[0], c.cjlY, c.cjlA[1], 'lg fk');
  tx(c.cjlB[0], c.cjlY, 'OPID 1303821.00', 'lg fk');
  c.days.forEach(d => tx(d[0], d[1], d[2], d[3] || 'days'));
  svg.innerHTML = o.join('');
}

/* 1 hour chart: two measuring frames joined at x = 1090 */
const A = frame(490, 2.613, 70), B = frame(1090, 2.958, 70);
const sp = (f, x, ys) => { const p = f([x, ys[0]])[0]; return [p[0], ...ys.map(v => f([0, v])[0][1])]; };
const spk = (f, x, y, t) => { const p = f([x, y])[0]; return [p[0], p[1], t]; };

drawChart({
  id: 'c60', seed: 12345, ax: 556, axPad: 2, right: 1616, sep: 358, bot: 491, dateY: 503, vtick: 1529,
  grids: [[190, '5200'], [284, '4800'], [379, '130万'], [435, '65万']],
  dates: [[696, '2021/05/28'], [864, '2021/06/08'], [1024, '2021/06/18'], [1191, '2021/06/29'], [1360, '2021/07/08'], [1528, '2021/07/19']],
  ticks: [[1605, 1616, 145], [1592, 1616, 243], [1605, 1616, 267]],
  x0: 557, x1: 1551, pitch: 4, bw: 3, amp: 7, wick: 6, level: 25,
  k: [...A([178,752,205,775,250,770,300,755,350,700,395,700,440,715,490,725,540,712,590,690,630,660,670,610,720,630,790,630,830,680,880,680,930,735,980,765,1030,730,1080,745,1140,750,1180,690,1230,660,1290,590,1340,590,1370,640,1400,680,1470,655,1510,610]), ...B([0,545,40,505,90,495,130,400,160,378,250,380,300,440,360,445,430,430,520,430,560,340,640,230,660,240,700,390,735,430,790,525,840,500,900,450,950,450,1020,380,1100,375,1150,440,1220,425,1290,410,1320,480,1350,530,1365,522])],
  b: [...A([178,770,230,772,280,765,340,735,400,708,450,720,500,720,550,722,600,700,650,660,700,632,780,632,820,650,860,665,900,700,950,740,1000,755,1050,735,1100,745,1140,748,1190,710,1240,650,1290,615,1340,585,1380,625,1420,672,1470,665,1520,620]), ...B([0,572,50,520,100,480,150,415,200,382,250,378,300,410,370,448,440,440,520,430,570,370,620,290,655,262,700,305,740,370,780,480,840,510,900,470,960,450,1030,405,1100,378,1150,410,1220,430,1290,415,1320,440,1360,475])],
  m: [...A([178,730,230,750,280,767,340,750,400,728,470,718,560,716,620,705,680,675,740,662,790,642,860,650,930,680,1000,725,1060,730,1110,745,1160,745,1240,715,1300,665,1360,625,1420,623,1490,633]), ...B([0,618,50,590,100,545,150,480,200,445,250,412,310,400,380,412,450,438,520,435,590,385,660,340,730,333,780,360,840,415,890,465,950,478,1010,460,1070,415,1150,408,1220,425,1290,412,1320,430,1360,452])],
  g: [...A([178,712,230,745,300,738,400,735,480,733,560,730,640,710,700,690,770,680,850,675,960,680,1050,690,1130,715,1190,718,1280,700,1350,680,1420,670,1500,640]), ...B([0,622,50,598,110,573,210,537,270,490,350,450,450,436,530,420,590,398,660,382,780,398,930,403,1020,408,1120,430,1180,440,1300,420,1360,430])],
  y: [...A([178,677,230,690,300,710,400,725,500,730,640,722,720,710,790,698,900,690,1040,695,1200,697,1320,688,1480,685]), ...B([0,662,90,630,170,585,270,540,340,520,440,503,520,478,600,435,680,398,800,397,940,412,1080,408,1180,410,1300,418,1360,440])],
  cjl: [...A([178,1052,205,1057,250,1040,300,1056,350,1080,410,1090,470,1075,530,1092,580,1070,630,1068,670,1040,720,1052,785,1040,810,1075,860,1098,900,1075,950,1060,1000,1075,1060,1090,1135,1082,1160,1135,1225,1140,1240,1105,1350,1060,1395,1130,1455,1132,1500,1108]), ...B([0,1050,30,1018,85,1018,110,950,135,933,180,957,260,968,295,1022,370,1042,405,1032,440,1065,520,1082,545,1037,640,1050,680,1115,720,1135,765,1215,800,1228,840,1235,900,1245,1060,1240,1100,1248,1220,1255,1330,1240,1360,1262])],
  spikes: [spk(B,107,933,'r'), spk(B,95,1087,'r'), spk(B,662,1012,'g'), spk(B,675,1003,'g'), spk(B,747,997,'g'), spk(B,735,1087,'g'), spk(B,1113,1053,'g'), spk(B,1303,1057,'g'), spk(B,1315,1075,'g'), spk(B,1327,1152,'g'), spk(B,545,1068,'r'), spk(B,533,1108,'r'), spk(B,450,1090,'g'), spk(B,25,1098,'r'), spk(B,415,1122,'g'), spk(B,1255,1128,'g'), spk(B,805,1135,'r'), spk(B,592,1110,'r'), spk(B,615,1105,'r'), spk(B,1160,1143,'r'),
    spk(A,795,1107,'g'), spk(A,250,1110,'r'), spk(A,355,1152,'g'), spk(A,315,1143,'r'), spk(A,628,1143,'r'), spk(A,940,1143,'g'), spk(A,1150,1135,'r'), spk(A,1172,1158,'g'), spk(A,1235,1102,'r'), spk(A,1287,1143,'r'), spk(A,1360,1132,'g')],
  specials: [sp(B,652,[192,245,195,230]), sp(B,665,[258,360,258,335]), sp(B,747,[460,565,460,525]), sp(B,1315,[492,570,492,560]), sp(B,1303,[430,498,430,495]), sp(B,1113,[425,500,430,462]), sp(A,670,[580,620,582,610]), sp(A,1287,[548,590,570,590]), sp(A,950,[735,780,735,770]), sp(A,795,[640,725,655,710]), sp(B,107,[335,425,425,378])],
  labels: [[...B([640,163])[0], '5440', 'r'], [...B([745,593])[0], '4916', 'g'], [...B([1325,598])[0], '4908', 'g'], [...A([668,553])[0], '4886', 'r'], [...A([950,812])[0], '4606', 'g']],
  legendY: 103, cjlY: 369, chev1: 735, chev2: 612,
  legend: [[563, 'b', 'MA组合(5,10,20,40,60,0)'], [755, 'k', 'MA5 4954.80'], [853, 'b', 'MA10 5032.80'], [958, 'm', 'MA20 5070.10'], [1062, 'g', 'MA40 5101.10'], [1168, 'y', 'MA60 5085.43']],
  cjlA: [629, '185170.00(45:55)'], cjlB: [757],
  days: [[556, 347, '42天']]
});

/* 5 minute chart */
const C = frame(40, 3, 520);
drawChart({
  id: 'c5', seed: 777, ax: 102, axPad: 2, right: 485, gutter: 487, sep: 808, bot: 938, dateY: 951, vtick: 216,
  grids: [[640, '5100'], [717, '5000'], [829, '18万'], [884, '88000']],
  dates: [[216, '21:00'], [387, '14:00']],
  ticks: [[461, 485, 737]],
  x0: 103, x1: 421, pitch: 3.5, bw: 3, amp: 7, wick: 5, level: 17,
  k: C([190,260,215,300,250,355,290,405,315,400,350,330,400,290,430,255,480,240,525,240,555,360,590,430,620,470,650,590,685,650,710,690,760,720,800,740,850,735,890,745,925,775,960,730,1000,670,1060,650,1100,630,1140,645]),
  b: C([190,285,230,285,270,330,320,380,370,350,420,295,470,255,525,250,560,310,590,380,630,470,670,590,710,690,750,700,790,730,850,738,920,760,960,745,1010,680,1060,650,1110,640,1140,640]),
  m: C([190,285,250,300,300,330,350,345,400,345,450,310,525,255,570,285,620,340,660,410,710,540,760,620,800,690,850,725,920,750,960,750,1000,730,1060,700,1110,658,1145,655]),
  g: C([190,283,260,278,340,310,400,318,460,310,520,300,590,322,680,365,740,430,800,520,870,600,930,680,990,720,1060,718,1140,702]),
  y: C([190,303,300,313,440,295,520,292,620,325,690,360,760,430,850,480,960,575,1040,640,1100,665,1145,692]),
  cjl: C([190,1120,210,1160,240,1145,290,1085,340,1067,380,1090,400,1110,420,1095,480,1105,510,1100,530,1165,560,1130,590,1110,630,1045,640,1085,685,985,730,1080,740,1145,755,1090,790,985,830,950,880,935,960,935,985,990,1020,1000,1040,1060,1090,1100,1125,1160,1145,1252]),
  spikes: [spk(C,532,933,'g'), spk(C,622,1015,'g'), spk(C,632,1105,'g'), spk(C,642,1080,'g'), spk(C,702,1060,'g'), spk(C,692,1125,'g'), spk(C,748,1098,'r'), spk(C,542,1120,'r'), spk(C,290,1168,'r'), spk(C,712,1155,'r'), spk(C,612,1140,'g'), spk(C,652,1135,'g'), spk(C,1145,1185,'r'), spk(C,985,1185,'r')],
  specials: [sp(C,532,[388,498,388,420]), sp(C,290,[395,472,440,410]), sp(C,524,[215,240,240,222]), sp(C,200,[215,300,255,295]), sp(C,795,[740,808,740,785]), sp(C,703,[700,797,700,760]), sp(C,1145,[650,675,675,652]), sp(C,1085,[612,640,640,615])],
  labels: [[...C([519,185])[0], '5164', 'r'], [...C([285,503])[0], '5052', 'g'], [...C([1076,585])[0], '4992', 'r'], [...C([788,840])[0], '4908', 'g']],
  legendY: 561, cjlY: 819, chev1: 280, chev2: 152,
  legend: [[108, 'b', 'MA组合(5,10,20,40,60,0)'], [302, 'k', 'MA5 4974.40']],
  cjlA: [175, '38342.00(49:51)'], cjlB: [295],
  days: [[102, 797, '2天']]
});

/* 15 minute chart */
const D = frame(490, 2.24, 515);
drawChart({
  id: 'c15', seed: 4242, ax: 557, axPad: 2, right: 1172, gutter: 1175, sep: 805, bot: 938, dateY: 951, vtick: 1016,
  grids: [[664, '5100'], [727, '5000'], [881, '20万']],
  dates: [[648, '2021/07/13'], [832, '2021/07/15'], [1016, '2021/07/19']],
  ticks: [[1148, 1172, 744]],
  x0: 558, x1: 1104, pitch: 4, bw: 3, amp: 10, wick: 8, level: 22,
  k: D([152,505,185,525,220,470,250,440,280,430,310,330,350,300,375,320,420,355,460,300,500,305,540,245,575,250,610,310,635,350,670,545,710,495,760,510,800,480,835,430,880,470,925,430,965,470,1010,340,1050,390,1080,385,1115,455,1175,345,1200,410,1240,680,1265,760,1310,770,1350,700,1380,685]),
  b: D([152,510,200,520,240,470,280,440,320,340,380,310,420,330,470,310,520,300,580,262,630,310,670,430,715,520,780,500,830,440,870,465,920,440,980,440,1060,365,1110,420,1190,388,1220,450,1260,640,1310,770,1350,725,1380,712]),
  m: D([152,490,200,515,270,490,320,430,370,365,440,320,510,315,580,290,630,290,690,370,750,460,805,505,850,480,920,455,980,440,1040,405,1090,410,1150,390,1210,420,1280,540,1330,660,1380,718]),
  g: D([152,515,220,495,290,470,370,435,410,425,500,370,580,320,640,310,750,370,840,405,920,450,980,468,1030,445,1120,425,1180,408,1220,425,1290,490,1380,563]),
  y: D([152,570,270,520,400,450,530,405,630,367,830,373,980,408,1130,443,1190,437,1290,475,1380,517]),
  cjl: D([152,1057,175,1022,210,1025,218,1065,230,1010,255,1015,270,1055,290,1010,322,978,352,1098,385,958,400,998,432,1038,445,990,465,1000,485,985,512,995,525,940,545,975,557,1090,575,997,585,1050,610,1035,635,1090,645,1060,665,1075,685,1130,730,1125,760,1170,790,1050,810,1040,835,1105,860,1100,890,1138,920,1110,960,1130,970,1190,995,1095,1030,1125,1040,1175,1055,1140,1075,1175,1110,1105,1165,1140,1180,1170,1230,1040,1250,1170,1270,1015,1315,995,1345,1090,1365,1150,1380,1260]),
  spikes: [spk(D,637,940,'g'), spk(D,645,1085,'r'), spk(D,1183,1008,'g'), spk(D,1210,1052,'g'), spk(D,1228,1040,'g'), spk(D,1238,1065,'g'), spk(D,1200,1150,'g'), spk(D,1255,1138,'g'), spk(D,770,1125,'g'), spk(D,287,1138,'r'), spk(D,565,1158,'r'), spk(D,1050,1105,'r'), spk(D,358,1160,'r'), spk(D,845,1160,'g'), spk(D,880,1150,'r'), spk(D,1380,1195,'g')],
  specials: [sp(D,637,[420,605,435,600]), sp(D,647,[560,635,605,565]), sp(D,565,[195,250,230,248]), sp(D,1050,[320,495,370,400]), sp(D,1003,[278,380,285,330]), sp(D,1237,[715,805,715,750]), sp(D,1310,[760,815,810,770]), sp(D,1190,[450,565,470,500]), sp(D,1105,[420,543,465,515])],
  labels: [[...D([565,167])[0], '5234', 'r'], [...D([645,665])[0], '5002', 'g'], [...D([994,248])[0], '5190', 'r'], [...D([1263,845])[0], '4908', 'g']],
  legendY: 550, cjlY: 816, chev1: 733, chev2: 606,
  legend: [[562, 'b', 'MA组合(5,10,20,40,60,0)'], [756, 'k', 'MA5 4977.20'], [852, 'b', 'MA10 4962.60'], [957, 'm', 'MA20 4956.10']],
  cjlA: [629, '87761.00(39:61)'], cjlB: [749],
  days: [[556, 795, '6天']]
});

/* daily chart */
const E = frame(1180, 2.119, 515);
drawChart({
  id: 'cd', seed: 90210, ax: 1244, axPad: 3, right: 1914, gutter: 1917, sep: 805, bot: 938, dateY: 951, vtick: 1844,
  grids: [[668, '4800'], [723, '4400'], [881, '180万']],
  dates: [[1363, '2021/03/01'], [1583, '2021/05/06'], [1778, '2021/07/01']],
  ticks: [[1903, 1914, 587], [1889, 1914, 644], [1903, 1914, 658]],
  x0: 1245, x1: 1845, pitch: 5, bw: 4, amp: 14, wick: 8, redLine: 651,
  level: E([137,1255,380,1225,540,1215,640,1185,800,1140,1000,1130,1150,1125,1300,1105,1412,1105]).map(p => [p[0], 938 - p[1]]),
  k: E([137,745,170,770,220,785,260,725,310,690,345,640,370,530,400,450,430,490,470,490,510,530,550,570,590,605,640,580,680,560,730,570,770,490,815,520,860,430,900,435,950,510,1000,515,1040,490,1085,465,1120,525,1180,470,1220,420,1250,340,1310,300,1350,350,1400,320,1412,340]),
  b: E([137,760,190,765,240,750,300,700,340,650,380,560,420,490,450,468,490,490,530,540,590,590,640,600,680,565,720,580,780,530,840,490,905,445,960,480,1000,510,1070,500,1130,520,1190,480,1240,400,1280,370,1310,318,1350,335,1412,325]),
  m: E([137,788,210,770,270,745,340,715,400,620,460,565,530,510,570,515,620,560,680,570,730,580,810,545,900,490,960,480,1030,478,1100,497,1180,485,1240,450,1300,405,1340,380,1412,330]),
  g: E([137,810,220,785,330,760,380,720,450,660,550,615,650,575,730,550,820,540,930,528,1040,490,1100,490,1180,490,1250,462,1330,430,1395,410]),
  y: E([137,870,250,825,340,790,450,715,580,665,700,620,800,580,910,535,1010,522,1130,520,1250,480,1340,445,1395,430]),
  cjl: E([137,1267,200,1245,240,1225,320,1215,340,1198,390,1235,440,1215,500,1190,540,1168,600,1140,650,1080,690,1025,720,1028,750,992,800,993,820,962,850,1015,905,972,920,992,970,998,1000,1025,1050,1000,1070,998,1085,1025,1120,1025,1145,1055,1165,1020,1185,1055,1230,940,1280,1020,1300,1005,1330,1115,1400,1125,1412,1130]),
  spikes: [spk(E,913,988,'g'), spk(E,1315,966,'g'), spk(E,1410,1015,'g'), spk(E,1230,940,'r'), spk(E,965,1052,'r'), spk(E,922,1025,'g'), spk(E,1325,1018,'g'), spk(E,1240,1030,'r'), spk(E,1293,1030,'r'), spk(E,1305,1040,'r'), spk(E,540,1168,'g'), spk(E,138,1252,'g')],
  specials: [sp(E,382,[348,460,360,455]), sp(E,1304,[195,260,222,258]), sp(E,1315,[232,345,232,320]), sp(E,1410,[338,415,338,388]), sp(E,445,[390,452,432,452]), sp(E,868,[382,432,410,428]), sp(E,1293,[250,320,255,315]), sp(E,965,[490,565,525,510]), sp(E,1228,[275,400,305,380])],
  labels: [[...E([381,320])[0], '5070', 'r'], [...E([868,352])[0], '4988', 'r'], [...E([1302,166])[0], '5442', 'r'], [...E([572,683])[0], '4336', 'g'], [...E([964,596])[0], '4546', 'g'], [...E([1409,445])[0], '4906', 'g'], [...E([180,846])[0], '3948', 'g']],
  legendY: 550, cjlY: 816, chev1: 1420, chev2: 1294,
  legend: [[1249, 'b', 'MA组合(5,10,20,40,60,0)'], [1442, 'k', 'MA5 5104.40'], [1540, 'b', 'MA10 5087.20'], [1645, 'm', 'MA20 5109.90'], [1750, 'g', 'MA40 4930.05']],
  cjlA: [1316, '2643255.00(47:53)'], cjlB: [1452],
  days: [[1245, 795, '121天']]
});
```
